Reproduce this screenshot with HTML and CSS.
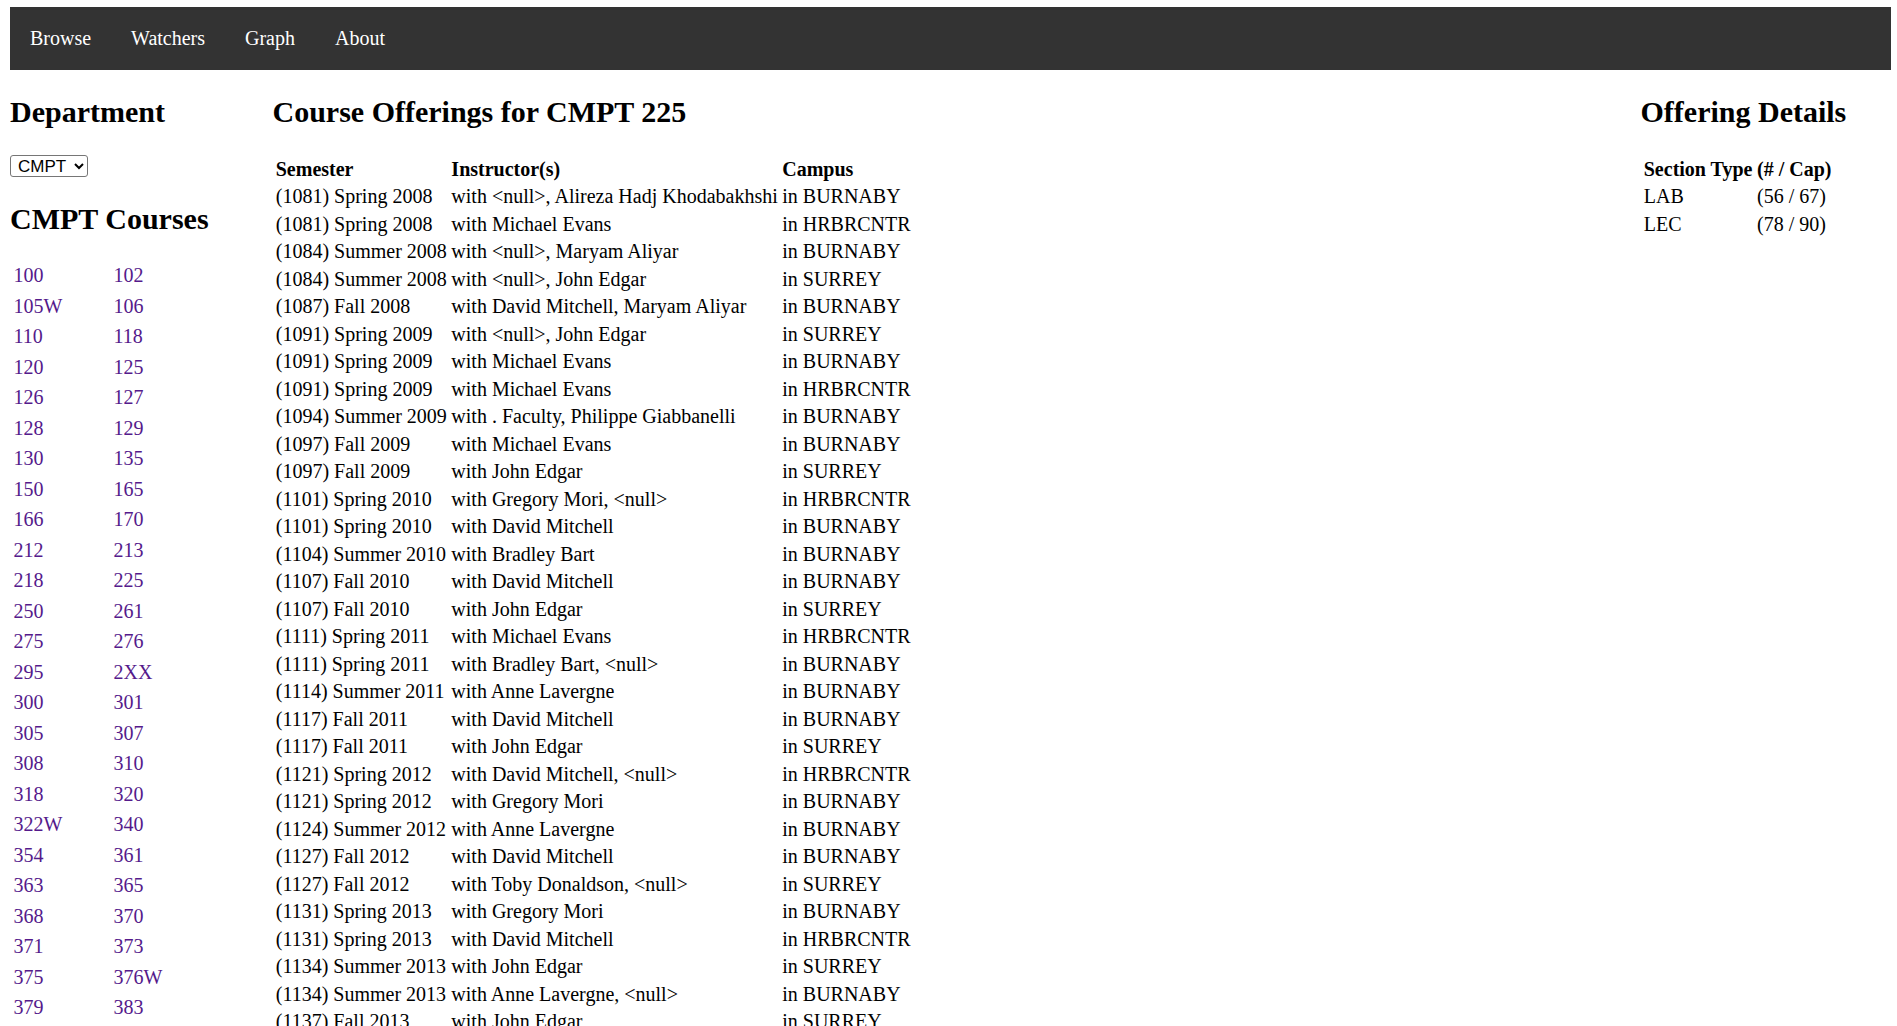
FILE: index.html
```html
<!DOCTYPE html>
<html lang="en">
<head>
<meta charset="utf-8">
<title>Course Planner</title>
<link rel="stylesheet" href="styles.css">
</head>
<body class="page">
<nav class="topnav">
  <a class="topnav-link" href="#">Browse</a>
  <a class="topnav-link" href="#">Watchers</a>
  <a class="topnav-link" href="#">Graph</a>
  <a class="topnav-link" href="#">About</a>
</nav>
<main class="layout">
  <section class="col col-dept">
    <h2 class="heading">Department</h2>
    <div class="dept-form">
      <select class="dept-select">
        <option>CMPT</option>
      </select>
    </div>
    <h2 class="heading">CMPT Courses</h2>
    <div class="course-grid">
      <a class="course-link" href="#">100</a><a class="course-link" href="#">102</a>
      <a class="course-link" href="#">105W</a><a class="course-link" href="#">106</a>
      <a class="course-link" href="#">110</a><a class="course-link" href="#">118</a>
      <a class="course-link" href="#">120</a><a class="course-link" href="#">125</a>
      <a class="course-link" href="#">126</a><a class="course-link" href="#">127</a>
      <a class="course-link" href="#">128</a><a class="course-link" href="#">129</a>
      <a class="course-link" href="#">130</a><a class="course-link" href="#">135</a>
      <a class="course-link" href="#">150</a><a class="course-link" href="#">165</a>
      <a class="course-link" href="#">166</a><a class="course-link" href="#">170</a>
      <a class="course-link" href="#">212</a><a class="course-link" href="#">213</a>
      <a class="course-link" href="#">218</a><a class="course-link" href="#">225</a>
      <a class="course-link" href="#">250</a><a class="course-link" href="#">261</a>
      <a class="course-link" href="#">275</a><a class="course-link" href="#">276</a>
      <a class="course-link" href="#">295</a><a class="course-link" href="#">2XX</a>
      <a class="course-link" href="#">300</a><a class="course-link" href="#">301</a>
      <a class="course-link" href="#">305</a><a class="course-link" href="#">307</a>
      <a class="course-link" href="#">308</a><a class="course-link" href="#">310</a>
      <a class="course-link" href="#">318</a><a class="course-link" href="#">320</a>
      <a class="course-link" href="#">322W</a><a class="course-link" href="#">340</a>
      <a class="course-link" href="#">354</a><a class="course-link" href="#">361</a>
      <a class="course-link" href="#">363</a><a class="course-link" href="#">365</a>
      <a class="course-link" href="#">368</a><a class="course-link" href="#">370</a>
      <a class="course-link" href="#">371</a><a class="course-link" href="#">373</a>
      <a class="course-link" href="#">375</a><a class="course-link" href="#">376W</a>
      <a class="course-link" href="#">379</a><a class="course-link" href="#">383</a>
    </div>
  </section>

  <section class="col col-offerings">
    <h2 class="heading">Course Offerings for CMPT 225</h2>
    <table class="data-table">
      <thead>
        <tr><th>Semester</th><th>Instructor(s)</th><th>Campus</th></tr>
      </thead>
      <tbody>
        <tr><td>(1081) Spring 2008</td><td>with &lt;null&gt;, Alireza Hadj Khodabakhshi</td><td>in BURNABY</td></tr>
        <tr><td>(1081) Spring 2008</td><td>with Michael Evans</td><td>in HRBRCNTR</td></tr>
        <tr><td>(1084) Summer 2008</td><td>with &lt;null&gt;, Maryam Aliyar</td><td>in BURNABY</td></tr>
        <tr><td>(1084) Summer 2008</td><td>with &lt;null&gt;, John Edgar</td><td>in SURREY</td></tr>
        <tr><td>(1087) Fall 2008</td><td>with David Mitchell, Maryam Aliyar</td><td>in BURNABY</td></tr>
        <tr><td>(1091) Spring 2009</td><td>with &lt;null&gt;, John Edgar</td><td>in SURREY</td></tr>
        <tr><td>(1091) Spring 2009</td><td>with Michael Evans</td><td>in BURNABY</td></tr>
        <tr><td>(1091) Spring 2009</td><td>with Michael Evans</td><td>in HRBRCNTR</td></tr>
        <tr><td>(1094) Summer 2009</td><td>with . Faculty, Philippe Giabbanelli</td><td>in BURNABY</td></tr>
        <tr><td>(1097) Fall 2009</td><td>with Michael Evans</td><td>in BURNABY</td></tr>
        <tr><td>(1097) Fall 2009</td><td>with John Edgar</td><td>in SURREY</td></tr>
        <tr><td>(1101) Spring 2010</td><td>with Gregory Mori, &lt;null&gt;</td><td>in HRBRCNTR</td></tr>
        <tr><td>(1101) Spring 2010</td><td>with David Mitchell</td><td>in BURNABY</td></tr>
        <tr><td>(1104) Summer 2010</td><td>with Bradley Bart</td><td>in BURNABY</td></tr>
        <tr><td>(1107) Fall 2010</td><td>with David Mitchell</td><td>in BURNABY</td></tr>
        <tr><td>(1107) Fall 2010</td><td>with John Edgar</td><td>in SURREY</td></tr>
        <tr><td>(1111) Spring 2011</td><td>with Michael Evans</td><td>in HRBRCNTR</td></tr>
        <tr><td>(1111) Spring 2011</td><td>with Bradley Bart, &lt;null&gt;</td><td>in BURNABY</td></tr>
        <tr><td>(1114) Summer 2011</td><td>with Anne Lavergne</td><td>in BURNABY</td></tr>
        <tr><td>(1117) Fall 2011</td><td>with David Mitchell</td><td>in BURNABY</td></tr>
        <tr><td>(1117) Fall 2011</td><td>with John Edgar</td><td>in SURREY</td></tr>
        <tr><td>(1121) Spring 2012</td><td>with David Mitchell, &lt;null&gt;</td><td>in HRBRCNTR</td></tr>
        <tr><td>(1121) Spring 2012</td><td>with Gregory Mori</td><td>in BURNABY</td></tr>
        <tr><td>(1124) Summer 2012</td><td>with Anne Lavergne</td><td>in BURNABY</td></tr>
        <tr><td>(1127) Fall 2012</td><td>with David Mitchell</td><td>in BURNABY</td></tr>
        <tr><td>(1127) Fall 2012</td><td>with Toby Donaldson, &lt;null&gt;</td><td>in SURREY</td></tr>
        <tr><td>(1131) Spring 2013</td><td>with Gregory Mori</td><td>in BURNABY</td></tr>
        <tr><td>(1131) Spring 2013</td><td>with David Mitchell</td><td>in HRBRCNTR</td></tr>
        <tr><td>(1134) Summer 2013</td><td>with John Edgar</td><td>in SURREY</td></tr>
        <tr><td>(1134) Summer 2013</td><td>with Anne Lavergne, &lt;null&gt;</td><td>in BURNABY</td></tr>
        <tr><td>(1137) Fall 2013</td><td>with John Edgar</td><td>in SURREY</td></tr>
      </tbody>
    </table>
  </section>

  <section class="col col-details">
    <h2 class="heading">Offering Details</h2>
    <table class="data-table">
      <thead>
        <tr><th>Section Type</th><th>(# / Cap)</th></tr>
      </thead>
      <tbody>
        <tr><td>LAB</td><td>(56 / 67)</td></tr>
        <tr><td>LEC</td><td>(78 / 90)</td></tr>
      </tbody>
    </table>
  </section>
</main>
</body>
</html>
```

FILE: styles.css
```css
html {
  overflow: hidden;
}

.page {
  margin: 7px 6px 0 10px;
  font-family: "Liberation Serif", "Times New Roman", serif;
  font-size: 20px;
  color: #000;
  background: #fff;
}

.topnav {
  display: flex;
  background: #333333;
  padding: 0;
}

.topnav-link {
  display: block;
  padding: 20px 20px;
  line-height: 23px;
  font-size: 20px;
  color: #fff;
  text-decoration: none;
}

.layout {
  display: grid;
  grid-template-columns: 262.5px 1fr 250.5px;
  align-items: start;
}

.heading {
  font-size: 30px;
  font-weight: bold;
  margin: 25px 0;
  line-height: 34.5px;
}

.dept-form {
  height: 22px;
}

.dept-select {
  display: block;
  box-sizing: border-box;
  width: 78px;
  height: 22px;
  font-family: "Liberation Sans", Arial, sans-serif;
  font-size: 17px;
  color: #000;
  background: #fff;
  border: 1px solid #767676;
  border-radius: 3px;
  padding: 0 0 0 3px;
}

.course-grid {
  display: grid;
  grid-template-columns: 100px 100px;
  grid-auto-rows: 30.5px;
  padding-left: 3.5px;
  padding-top: 2.4px;
}

.course-link {
  color: #551a8b;
  text-decoration: none;
  line-height: 23px;
  padding-top: 1px;
}

.data-table {
  border-collapse: separate;
  border-spacing: 2.5px 2px;
  margin-top: 0;
}

.data-table th,
.data-table td {
  padding: 1.25px;
  line-height: 23px;
  text-align: left;
  vertical-align: middle;
  white-space: nowrap;
}

.data-table th {
  font-weight: bold;
}
```
